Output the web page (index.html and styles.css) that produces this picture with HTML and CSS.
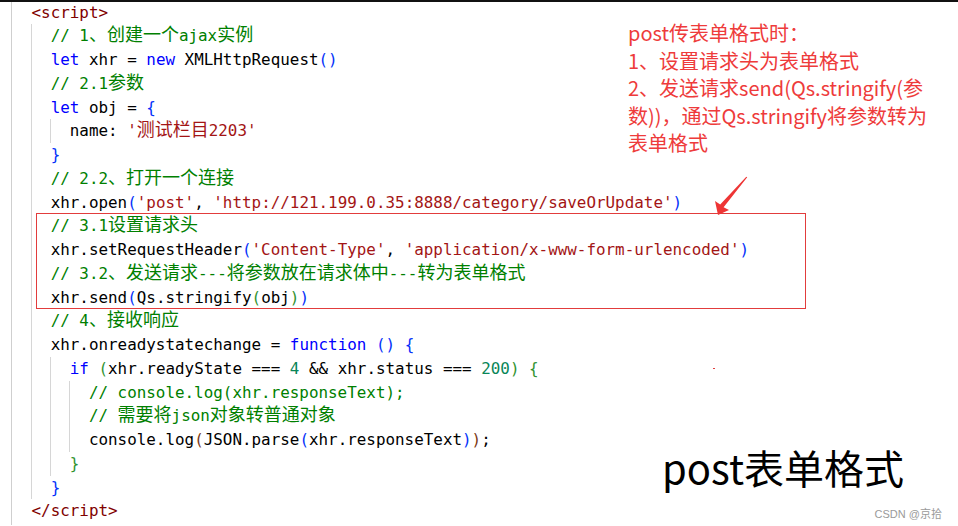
FILE: index.html
```html
<!DOCTYPE html>
<html lang="zh-CN">
<head>
<meta charset="utf-8">
<title>post表单格式</title>
<link rel="stylesheet" href="styles.css">
</head>
<body>
<div class="shot">
  <div class="editor">
    <div class="code">
      <div class="ln"><span class="tg">&lt;script&gt;</span></div>
      <div class="blk">
        <div class="ln"><span class="cm">// 1<span class="zh">、创建一个</span>ajax<span class="zh">实例</span></span></div>
        <div class="ln"><span class="kw">let</span> xhr = <span class="kw">new</span> XMLHttpRequest<span class="b1">()</span></div>
        <div class="ln"><span class="cm">// 2.1<span class="zh">参数</span></span></div>
        <div class="ln"><span class="kw">let</span> obj = <span class="b1">{</span></div>
        <div class="blk">
          <div class="ln">name: <span class="st">'<span class="zh">测试栏目</span>2203'</span></div>
        </div>
        <div class="ln"><span class="b1">}</span></div>
        <div class="ln"><span class="cm">// 2.2<span class="zh">、打开一个连接</span></span></div>
        <div class="ln">xhr.open<span class="b1">(</span><span class="st">'post'</span>, <span class="st">'http://121.199.0.35:8888/category/saveOrUpdate'</span><span class="b1">)</span></div>
        <div class="hl">
          <div class="ln"><span class="cm">// 3.1<span class="zh">设置请求头</span></span></div>
          <div class="ln">xhr.setRequestHeader<span class="b1">(</span><span class="st">'Content-Type'</span>, <span class="st">'application/x-www-form-urlencoded'</span><span class="b1">)</span></div>
          <div class="ln"><span class="cm">// 3.2<span class="zh">、发送请求</span>---<span class="zh">将参数放在请求体中</span>---<span class="zh">转为表单格式</span></span></div>
          <div class="ln">xhr.send<span class="b1">(</span>Qs.stringify<span class="b2">(</span>obj<span class="b2">)</span><span class="b1">)</span></div>
        </div>
        <div class="ln"><span class="cm">// 4<span class="zh">、接收响应</span></span></div>
        <div class="ln">xhr.onreadystatechange = <span class="kw">function</span> <span class="b1">()</span> <span class="b1">{</span></div>
        <div class="blk">
          <div class="ln"><span class="kw">if</span> <span class="b2">(</span>xhr.readyState === <span class="nu">4</span> &amp;&amp; xhr.status === <span class="nu">200</span><span class="b2">)</span> <span class="b2">{</span></div>
          <div class="blk">
            <div class="ln"><span class="cm">// console.log(xhr.responseText);</span></div>
            <div class="ln"><span class="cm">// <span class="zh">需要将</span>json<span class="zh">对象转普通对象</span></span></div>
            <div class="ln">console.log<span class="b3">(</span>JSON.parse<span class="b1">(</span>xhr.responseText<span class="b1">)</span><span class="b3">)</span>;</div>
          </div>
          <div class="ln"><span class="b2">}</span></div>
        </div>
        <div class="ln"><span class="b1">}</span></div>
      </div>
      <div class="ln"><span class="tg">&lt;/script&gt;</span></div>
    </div>
  </div>

  <div class="note">
    <div class="note-line">post传表单格式时：</div>
    <div class="note-line">1、设置请求头为表单格式</div>
    <div class="note-line">2、发送请求send(Qs.stringify(参</div>
    <div class="note-line">数))，通过Qs.stringify将参数转为</div>
    <div class="note-line">表单格式</div>
  </div>

  <svg class="arrow" width="60" height="60" viewBox="0 0 60 60" aria-hidden="true">
    <polygon points="47.2,10.3 46.3,9.7 20.2,37.6 15,34 18,48 29,43 23.6,40.2" fill="#ee3535"/>
  </svg>
  <span class="dot"></span>

  <div class="label">post表单格式</div>
  <div class="mark">CSDN @京拾</div>
</div>
</body>
</html>
```
FILE: styles.css
```css
html, body {
  margin: 0;
  padding: 0;
  background: #ffffff;
}

.shot {
  position: relative;
  width: 958px;
  height: 526px;
  box-sizing: border-box;
  border-top: 2px solid #111111;
  overflow: hidden;
  background: #ffffff;
}

.editor {
  margin-left: 11px;
  height: 100%;
  border-left: 1px solid #cfcfcf;
  padding-left: 19.5px;
}

.code {
  margin-top: -1.5px;
  font-family: "DejaVu Sans Mono", "Liberation Mono", "Noto Sans CJK SC", monospace;
  font-size: 15.9px;
  color: #000000;
}

.ln {
  height: 23.75px;
  line-height: 23.75px;
  white-space: pre;
}

.blk {
  margin-left: -1px;
  border-left: 1px solid #d6d6d6;
  padding-left: 2ch;
}

.hl {
  position: relative;
}

.hl::after {
  content: "";
  position: absolute;
  left: -15px;
  top: -1px;
  bottom: 0;
  width: 770px;
  box-sizing: border-box;
  border: 1px solid #e23c3c;
  pointer-events: none;
}

.zh {
  font-family: "Noto Sans CJK SC", sans-serif;
  font-size: 18px;
  line-height: 1;
}

.tg { color: #800000; }
.kw { color: #0000ff; }
.cm { color: #008000; }
.st { color: #a31515; }
.nu { color: #098658; }
.b1 { color: #0431fa; }
.b2 { color: #319331; }
.b3 { color: #7b3814; }

.note {
  position: absolute;
  left: 628px;
  top: 17px;
  font-family: "Noto Sans CJK SC", sans-serif;
  font-size: 20px;
  font-weight: 400;
  line-height: 27.6px;
  color: #ee3b3b;
  white-space: nowrap;
}

.arrow {
  position: absolute;
  left: 700px;
  top: 165px;
}

.dot {
  position: absolute;
  left: 713px;
  top: 366px;
  width: 2px;
  height: 1px;
  background: #e04040;
}

.label {
  position: absolute;
  left: 662px;
  top: 445px;
  font-family: "Noto Sans CJK SC", sans-serif;
  font-size: 40px;
  line-height: 40px;
  color: #000000;
  white-space: nowrap;
}

.mark {
  position: absolute;
  right: 16px;
  top: 504px;
  font-family: "Liberation Sans", "Noto Sans CJK SC", sans-serif;
  font-size: 11px;
  line-height: 16px;
  color: #9a9a9a;
  white-space: nowrap;
}
```
